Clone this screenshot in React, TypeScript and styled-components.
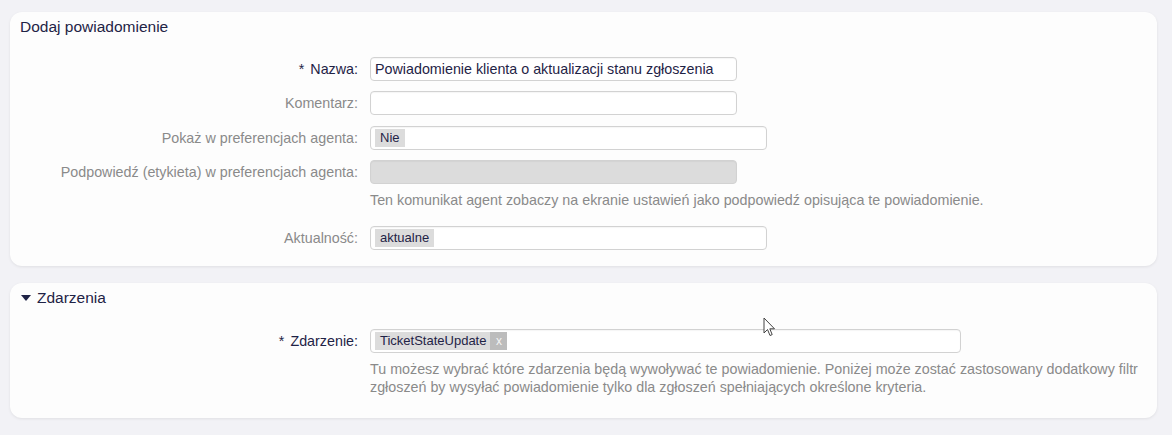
import React from "react";
import styled, { createGlobalStyle } from "styled-components";

const navy = "#1f2346";
const muted = "#8a8a8a";

const GlobalStyle = createGlobalStyle`
  html, body {
    margin: 0;
    padding: 0;
    background: #f2f2f6;
    font-family: "Liberation Sans", Arial, sans-serif;
    font-size: 14.3px;
  }
`;

const Page = styled.div`
  position: relative;
  padding: 12px 15px 16px 10px;
  display: flex;
  flex-direction: column;
  gap: 17px;
`;

const Card = styled.section<{ $bottom: number }>`
  background: #fdfdfd;
  border-radius: 12px;
  box-shadow: 0 1px 3px rgba(0, 0, 0, 0.08);
  padding: 0 12px ${(p) => p.$bottom}px 10px;
`;

const CardTitle = styled.h2`
  margin: 0;
  height: 30px;
  display: flex;
  align-items: center;
  gap: 4px;
  font-size: 15.5px;
  font-weight: 400;
  color: ${navy};
`;

const Form = styled.div<{ $top: number }>`
  display: grid;
  grid-template-columns: 338px 1fr;
  column-gap: 12px;
  row-gap: 10.4px;
  margin-top: ${(p) => p.$top}px;
`;

const Label = styled.label<{ $required?: boolean }>`
  text-align: right;
  line-height: 24px;
  color: ${(p) => (p.$required ? navy : muted)};
  white-space: nowrap;
`;

const Star = styled.span`
  margin-right: 6px;
`;

const Field = styled.div`
  display: flex;
  flex-direction: column;
`;

const Input = styled.div<{ $width: number; $disabled?: boolean }>`
  box-sizing: border-box;
  width: ${(p) => p.$width}px;
  height: 24px;
  border: 1px solid #d2d2d2;
  border-radius: 4px;
  background: ${(p) => (p.$disabled ? "#dcdcdc" : "#fff")};
  box-shadow: inset 0 1px 1px rgba(0, 0, 0, 0.04);
  display: flex;
  align-items: center;
  padding: 0 4px;
  color: ${navy};
  white-space: nowrap;
`;

const Tag = styled.span`
  display: inline-flex;
  align-items: center;
  height: 18px;
  background: #dcdcdc;
  color: ${navy};
  padding: 0 5px;
  font-size: 13px;
`;

const TagRemove = styled.span`
  display: inline-flex;
  align-items: center;
  justify-content: center;
  width: 17px;
  height: 18px;
  margin: 0 -5px 0 4px;
  background: #bcbcbc;
  color: #f4f4f4;
  font-size: 12px;
`;

const Hint = styled.p<{ $after?: number }>`
  margin: 7px 0 ${(p) => p.$after ?? 0}px;
  color: ${muted};
  line-height: 18px;
`;

const Caret = styled.span`
  display: inline-block;
  width: 0;
  height: 0;
  margin: 0 2px 0 1px;
  border-left: 5px solid transparent;
  border-right: 5px solid transparent;
  border-top: 6px solid ${navy};
`;

const Pointer = styled.svg`
  position: absolute;
  left: 763px;
  top: 317px;
`;

const App: React.FC = () => {
  return (
    <Page>
      <GlobalStyle />
      <Card $bottom={16}>
        <CardTitle>Dodaj powiadomienie</CardTitle>
        <Form $top={15}>
          <Label $required>
            <Star>*</Star>Nazwa:
          </Label>
          <Input $width={367}>
            Powiadomienie klienta o aktualizacji stanu zgłoszenia
          </Input>

          <Label>Komentarz:</Label>
          <Input $width={367} />

          <Label>Pokaż w preferencjach agenta:</Label>
          <Input $width={397}>
            <Tag>Nie</Tag>
          </Input>

          <Label>Podpowiedź (etykieta) w preferencjach agenta:</Label>
          <Field>
            <Input $width={367} $disabled />
            <Hint $after={6}>
              Ten komunikat agent zobaczy na ekranie ustawień jako podpowiedź
              opisująca te powiadomienie.
            </Hint>
          </Field>

          <Label>Aktualność:</Label>
          <Input $width={397}>
            <Tag>aktualne</Tag>
          </Input>
        </Form>
      </Card>

      <Card $bottom={22}>
        <CardTitle>
          <Caret />
          Zdarzenia
        </CardTitle>
        <Form $top={16}>
          <Label $required>
            <Star>*</Star>Zdarzenie:
          </Label>
          <Field>
            <Input $width={591}>
              <Tag>
                TicketStateUpdate<TagRemove>x</TagRemove>
              </Tag>
            </Input>
            <Hint>
              Tu możesz wybrać które zdarzenia będą wywoływać te powiadomienie.
              Poniżej może zostać zastosowany dodatkowy filtr zgłoszeń by
              wysyłać powiadomienie tylko dla zgłoszeń spełniających określone
              kryteria.
            </Hint>
          </Field>
        </Form>
      </Card>

      <Pointer width="14" height="22" viewBox="0 0 14 22">
        <path
          d="M1 1 L1 16 L4.5 12.5 L7 18.5 L9.2 17.6 L6.8 11.8 L11.5 11.8 Z"
          fill="#fff"
          stroke="#444"
          strokeWidth="1"
          strokeLinejoin="round"
        />
      </Pointer>
    </Page>
  );
};

export default App;
